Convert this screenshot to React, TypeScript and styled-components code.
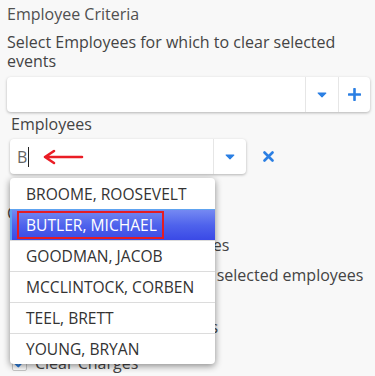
import styled, { createGlobalStyle } from "styled-components";

const GlobalStyle = createGlobalStyle`
  html, body {
    margin: 0;
    padding: 0;
    background: #f8f8f8;
    overflow: hidden;
  }
  body {
    font-family: "Open Sans", "Liberation Sans", Arial, sans-serif;
    color: #444;
  }
`;

const BLUE = "#2b7fe3";

function Caret() {
  return (
    <svg width="10" height="6" viewBox="0 0 10 6">
      <path d="M1.2 1 H8.8 L5 4.8 Z" fill={BLUE} stroke={BLUE} strokeWidth="1.2" strokeLinejoin="round" />
    </svg>
  );
}

function Plus() {
  return (
    <svg width="13" height="13" viewBox="0 0 13 13">
      <path d="M6.5 1 V12 M1 6.5 H12" stroke={BLUE} strokeWidth="2.6" strokeLinecap="round" />
    </svg>
  );
}

function Cross() {
  return (
    <svg width="11" height="11" viewBox="0 0 11 11">
      <path d="M1.5 1.5 L9.5 9.5 M9.5 1.5 L1.5 9.5" stroke={BLUE} strokeWidth="2.6" strokeLinecap="round" />
    </svg>
  );
}

function RedArrow() {
  return (
    <svg width="41" height="16" viewBox="0 0 41 16">
      <path d="M2 8 H39 M11 2 L2 8 L11 14" fill="none" stroke="#ea1d25" strokeWidth="2.6" strokeLinecap="round" strokeLinejoin="round" />
    </svg>
  );
}

function Check() {
  return (
    <svg width="11" height="9" viewBox="0 0 11 9">
      <path d="M1.5 4.5 L4.3 7.3 L9.5 1.5" fill="none" stroke={BLUE} strokeWidth="2.2" strokeLinecap="round" strokeLinejoin="round" />
    </svg>
  );
}

const names = [
  "BROOME, ROOSEVELT",
  "BUTLER, MICHAEL",
  "GOODMAN, JACOB",
  "MCCLINTOCK, CORBEN",
  "TEEL, BRETT",
  "YOUNG, BRYAN",
];

export default function App() {
  return (
    <>
      <GlobalStyle />
      <Page>
        <SectionTitle>Employee Criteria</SectionTitle>
        <Hint>Select Employees for which to clear selected events</Hint>
        <Combo $width={363}>
          <ComboField />
          <ComboButton>
            <Caret />
          </ComboButton>
          <ComboButton $narrow>
            <Plus />
          </ComboButton>
        </Combo>

        <Group>
          <FieldLabel>Employees</FieldLabel>
          <FieldRow>
            <Combo $width={236}>
              <ComboField>
                <Typed>B</Typed>
                <TextCursor />
                <ArrowMark>
                  <RedArrow />
                </ArrowMark>
              </ComboField>
              <ComboButton>
                <Caret />
              </ComboButton>
            </Combo>
            <ClearButton>
              <Cross />
            </ClearButton>
            <Menu>
              {names.map((n, i) => (
                <MenuItem key={n} $active={i === 1} $first={i === 0}>
                  {i === 1 ? <Marked>{n}</Marked> : n}
                </MenuItem>
              ))}
            </Menu>
          </FieldRow>
        </Group>

        <OptionsTitle>Clear Options</OptionsTitle>
        <Options>
          <OptionRow $gap={11}>
            <Radio />
            <span>Clear All Active Employees</span>
          </OptionRow>
          <OptionRow $gap={10}>
            <Radio />
            <span>Clear events for just the selected employees</span>
          </OptionRow>
          <OptionRow $gap={6}>
            <Box />
            <span>Clear Events</span>
          </OptionRow>
          <OptionRow $gap={6}>
            <Box />
            <span>Clear Schedule Requests</span>
          </OptionRow>
          <OptionRow $gap={16}>
            <Box>
              <Check />
            </Box>
            <span>Clear Charges</span>
          </OptionRow>
        </Options>
      </Page>
    </>
  );
}

const Page = styled.div`
  padding: 3px 5px 0 7px;
  display: flex;
  flex-direction: column;
`;

const SectionTitle = styled.div`
  font-size: 16px;
  line-height: 22px;
  color: #505050;
`;

const Hint = styled.div`
  margin-top: 8px;
  font-size: 16px;
  line-height: 19px;
  color: #444;
  padding-right: 30px;
`;

const Combo = styled.div<{ $width: number }>`
  display: flex;
  width: ${(p) => p.$width}px;
  height: 35px;
  margin-top: 6px;
  background: #fff;
  border-radius: 4px;
  box-shadow: 0 1px 3px rgba(0, 0, 0, 0.28);
  box-sizing: border-box;
  flex-shrink: 0;
`;

const ComboField = styled.div`
  flex: 1;
  display: flex;
  align-items: center;
  padding-left: 7px;
  font-size: 16px;
  color: #555;
`;

const ComboButton = styled.div<{ $narrow?: boolean }>`
  width: ${(p) => (p.$narrow ? 31 : 32)}px;
  display: flex;
  align-items: center;
  justify-content: center;
  border-left: 1px solid #e6e6e6;
`;

const Group = styled.div`
  margin-left: 3px;
  margin-top: 1px;
  display: flex;
  flex-direction: column;
`;

const FieldLabel = styled.div`
  font-size: 16px;
  line-height: 22px;
  padding-left: 1px;
  color: #444;
`;

const FieldRow = styled.div`
  position: relative;
  display: flex;
  align-items: center;
  margin-top: -2px;
`;

const Typed = styled.span`
  line-height: 20px;
  color: #666;
`;

const TextCursor = styled.span`
  width: 1px;
  height: 20px;
  background: #222;
  margin-left: 1px;
`;

const ArrowMark = styled.span`
  display: flex;
  margin-left: 14px;
`;

const ClearButton = styled.div`
  width: 44px;
  display: flex;
  justify-content: center;
  padding-top: 6px;
`;

const Menu = styled.div`
  position: absolute;
  left: 0;
  top: 45px;
  width: 205px;
  background: #fff;
  border-radius: 4px;
  box-shadow: 0 2px 7px rgba(0, 0, 0, 0.45);
  overflow: hidden;
  z-index: 2;
`;

const MenuItem = styled.div<{ $active?: boolean; $first?: boolean }>`
  height: 31px;
  box-sizing: border-box;
  display: flex;
  align-items: center;
  padding-left: 16px;
  font-size: 15.6px;
  color: #333;
  border-top: ${(p) => (p.$first ? "none" : "1px solid #dcdcdc")};
  ${(p) =>
    p.$active &&
    `
    padding-left: 5px;
    color: #fff;
    border-top: 1px solid #5ea3f0;
    border-left: 2px solid #5ea3f0;
    background: linear-gradient(180deg, #7589f2 0%, #4f63ec 50%, #3a49e6 100%);
  `}
`;

const Marked = styled.span`
  border: 2px solid #e41c24;
  padding: 1px 5px 1px 7px;
  line-height: 22px;
`;

const OptionsTitle = styled.div`
  margin-top: 28px;
  font-size: 16px;
  line-height: 22px;
`;

const Options = styled.div`
  display: flex;
  flex-direction: column;
  padding-left: 5px;
`;

const OptionRow = styled.div<{ $gap: number }>`
  display: flex;
  align-items: center;
  gap: 8px;
  margin-top: ${(p) => p.$gap}px;
  font-size: 16px;
  line-height: 20px;
  color: #444;
`;

const Radio = styled.span`
  width: 13px;
  height: 13px;
  border-radius: 50%;
  border: 1px solid #bbb;
  background: #fff;
`;

const Box = styled.span`
  width: 13px;
  height: 13px;
  border: 1px solid #c8c8c8;
  border-radius: 2px;
  background: #fff;
  display: flex;
  align-items: center;
  justify-content: center;
`;
